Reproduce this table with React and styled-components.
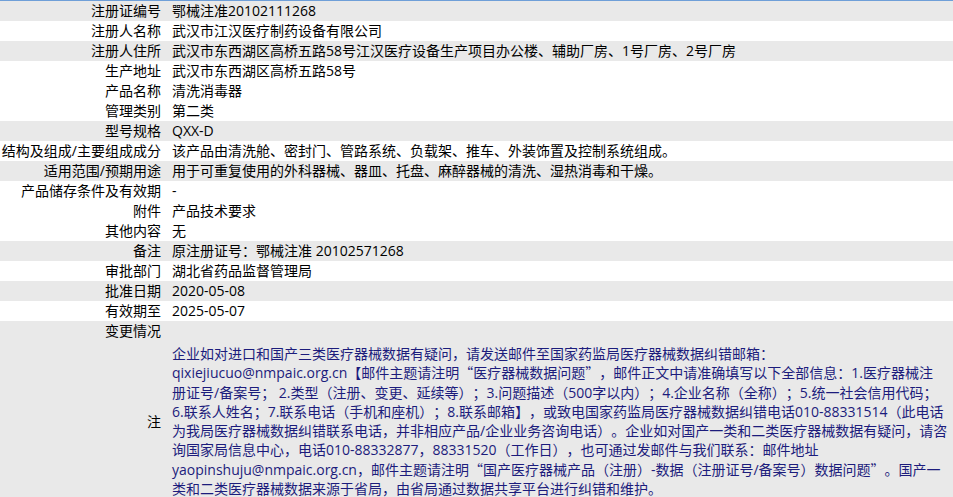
import React from 'react';
import styled, { createGlobalStyle } from 'styled-components';

const GlobalStyle = createGlobalStyle`
  html, body {
    margin: 0;
    padding: 0;
    background: #ffffff;
  }
  body {
    font-family: "Open Sans", "Noto Sans CJK SC", sans-serif;
    font-size: 14px;
    color: #000000;
    text-spacing-trim: space-all;
  }
`

const Table = styled.div`
  width: 953px;
  display: flex;
  flex-direction: column;
`

const Row = styled.div`
  display: grid;
  grid-template-columns: 164px 1fr;
  align-items: center;
  min-height: 20px;
  box-sizing: border-box;
  background: ${p => (p.$shade ? '#e9e9e9' : '#ffffff')};
  &:first-child {
    border-top: 1px solid #6f9fd8;
  }
`

const Label = styled.div`
  text-align: right;
  line-height: 20px;
  white-space: nowrap;
  padding-right: 3px;
`

const Value = styled.div`
  line-height: 20px;
  padding-left: 8px;
  white-space: nowrap;
`

const Note = styled.div`
  padding: 3px 0 4px 8px;
  color: #1c1c7c;
  line-height: 19.3px;
`

const NoteLine = styled.div`
  white-space: nowrap;
`

// full-width quotes, as the CJK font draws them
const Quote = styled.span`
  font-family: "Noto Sans CJK SC", sans-serif;
`

const rows = [
  ['注册证编号', '鄂械注准20102111268', true],
  ['注册人名称', '武汉市江汉医疗制药设备有限公司', false],
  ['注册人住所', '武汉市东西湖区高桥五路58号江汉医疗设备生产项目办公楼、辅助厂房、1号厂房、2号厂房', true],
  ['生产地址', '武汉市东西湖区高桥五路58号', false],
  ['产品名称', '清洗消毒器', false],
  ['管理类别', '第二类', false],
  ['型号规格', 'QXX-D', true],
  ['结构及组成/主要组成成分', '该产品由清洗舱、密封门、管路系统、负载架、推车、外装饰置及控制系统组成。', false],
  ['适用范围/预期用途', '用于可重复使用的外科器械、器皿、托盘、麻醉器械的清洗、湿热消毒和干燥。', true],
  ['产品储存条件及有效期', '-', false],
  ['附件', '产品技术要求', false],
  ['其他内容', '无', false],
  ['备注', '原注册证号：鄂械注准 20102571268', true],
  ['审批部门', '湖北省药品监督管理局', false],
  ['批准日期', '2020-05-08', true],
  ['有效期至', '2025-05-07', false],
  ['变更情况', '', true],
];

const noteLines = [
  '企业如对进口和国产三类医疗器械数据有疑问，请发送邮件至国家药监局医疗器械数据纠错邮箱：',
  'qixiejiucuo@nmpaic.org.cn【邮件主题请注明“医疗器械数据问题”，邮件正文中请准确填写以下全部信息：1.医疗器械注',
  '册证号/备案号； 2.类型（注册、变更、延续等）；3.问题描述（500字以内）；4.企业名称（全称）；5.统一社会信用代码；',
  '6.联系人姓名；7.联系电话（手机和座机）；8.联系邮箱】，或致电国家药监局医疗器械数据纠错电话010-88331514（此电话',
  '为我局医疗器械数据纠错联系电话，并非相应产品/企业业务咨询电话）。企业如对国产一类和二类医疗器械数据有疑问，请咨',
  '询国家局信息中心，电话010-88332877，88331520（工作日），也可通过发邮件与我们联系：邮件地址',
  'yaopinshuju@nmpaic.org.cn，邮件主题请注明“国产医疗器械产品（注册）-数据（注册证号/备案号）数据问题”。国产一',
  '类和二类医疗器械数据来源于省局，由省局通过数据共享平台进行纠错和维护。',
];

const renderLine = (line) =>
  line.split(/([“”])/).map((part, i) =>
    part === '“' || part === '”' ? <Quote key={i}>{part}</Quote> : part
  );

const App = () => {
  return (
    <>
      <GlobalStyle />
      <Table>
        {rows.map(([label, value, shade]) => (
          <Row key={label} $shade={shade}>
            <Label>{label}</Label>
            <Value>{value}</Value>
          </Row>
        ))}
        <Row $shade>
          <Label>注</Label>
          <Note>
            {noteLines.map((line, i) => (
              <NoteLine key={i}>{renderLine(line)}</NoteLine>
            ))}
          </Note>
        </Row>
      </Table>
    </>
  );
}

export default App;
